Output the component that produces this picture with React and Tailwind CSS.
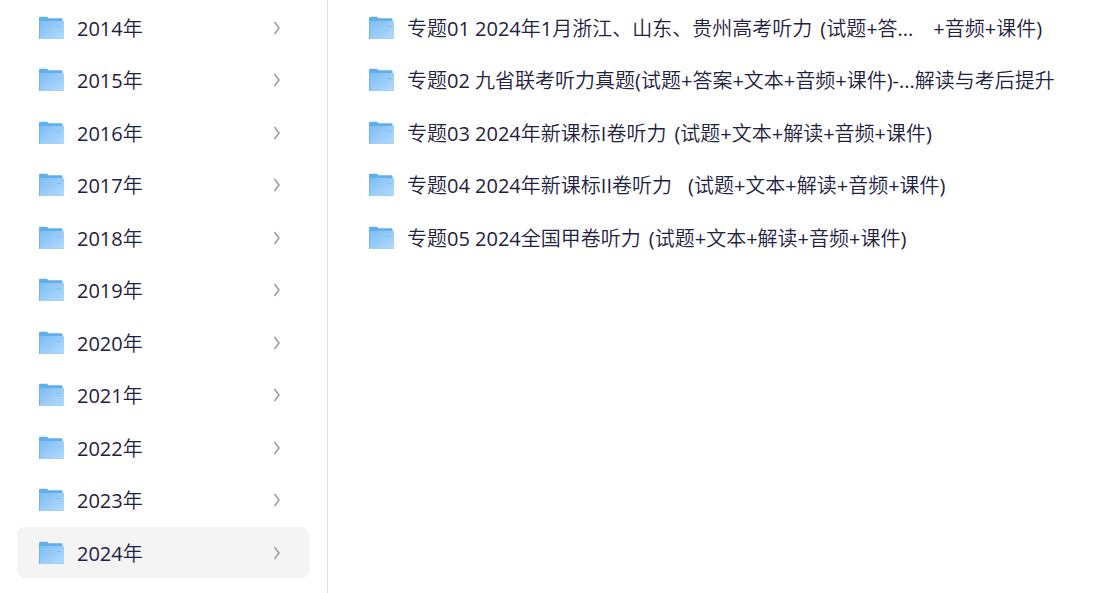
import clsx from 'clsx';

const years = ['2014年', '2015年', '2016年', '2017年', '2018年', '2019年', '2020年', '2021年', '2022年', '2023年', '2024年'];

const topics = [
  { head: '专题01 2024年1月浙江、山东、贵州高考听力', tail: '(试题+答...', end: '+音频+课件)' },
  { head: '专题02 九省联考听力真题(试题+答案+文本+音频+课件)-...解读与考后提升' },
  { head: '专题03 2024年新课标I卷听力', tail: '(试题+文本+解读+音频+课件)' },
  { head: '专题04 2024年新课标II卷听力', tail: '(试题+文本+解读+音频+课件)', wide: true },
  { head: '专题05 2024全国甲卷听力', tail: '(试题+文本+解读+音频+课件)' },
];

const FolderIcon = () => (
  <svg width="26" height="24" viewBox="0 0 26 24" className="shrink-0" aria-hidden="true">
    <defs>
      <linearGradient id="folder-front" x1="0" y1="0" x2="1" y2="1">
        <stop offset="0" stopColor="#7dbdf3" />
        <stop offset="1" stopColor="#b3dbff" />
      </linearGradient>
    </defs>
    <path d="M0 2Q0 0.8 1.2 0.8H8L9.5 2.3H22.5Q23.5 2.3 23.5 3.3V10H0Z" fill="#61aeec" />
    <path d="M1 6Q1 5 2 5H24Q25 5 25 6V22Q25 23 24 23H1Z" fill="url(#folder-front)" />
    <path d="M0 5H1V23H0Z" fill="#72b6ef" />
    <path d="M1 22H24.5V23H1Z" fill="#a0d0fb" />
    <path d="M18 10.5H22" stroke="#7dbbf0" strokeWidth="1" />
  </svg>
);

const ChevronIcon = () => (
  <svg width="8" height="16" viewBox="0 0 8 16" fill="none" className="shrink-0" aria-hidden="true">
    <path d="M1.5 2L6 8L1.5 14" stroke="#9696a4" strokeWidth="1.4" />
  </svg>
);

const YearRow = ({ label, active }) => (
  <li className="pb-px even:pb-0.5">
    <button
      type="button"
      aria-pressed={active}
      className={clsx('flex h-[51px] w-full items-center rounded-lg pr-7 pl-[22px]', active && 'bg-[#f4f4f4]')}
    >
      <FolderIcon />
      <span className="ml-3 flex-1 pt-0.5 text-left">{label}</span>
      <ChevronIcon />
    </button>
  </li>
);

const TopicRow = ({ head, tail, end, wide }) => (
  <li className="pb-px even:pb-0.5">
    <button type="button" className="flex h-[51px] w-full items-center rounded-lg pl-[22px] whitespace-nowrap">
      <FolderIcon />
      <span className="ml-3 pt-0.5">{head}</span>
      {tail && <span className={clsx('pt-0.5', wide ? 'ml-4' : 'ml-2')}>{tail}</span>}
      {end && <span className="ml-5 pt-0.5">{end}</span>}
    </button>
  </li>
);

export default function App() {
  return (
    <div className="flex min-h-screen bg-white font-['Open_Sans','Noto_Sans_CJK_SC_DemiLight','Noto_Sans_CJK_SC_Light','Noto_Sans_CJK_SC',sans-serif] text-[20px] leading-7 text-[#1f2140]">
      <nav aria-label="年份" className="w-[328px] shrink-0 border-r border-[#e2e2e5] pt-0.5 pr-[18px] pl-[17px]">
        <ul>
          {years.map((year) => (
            <YearRow key={year} label={year} active={year === '2024年'} />
          ))}
        </ul>
      </nav>
      <main className="min-w-0 flex-1 pt-0.5 pl-[19px]">
        <ul>
          {topics.map((topic) => (
            <TopicRow key={topic.head} {...topic} />
          ))}
        </ul>
      </main>
    </div>
  );
}
